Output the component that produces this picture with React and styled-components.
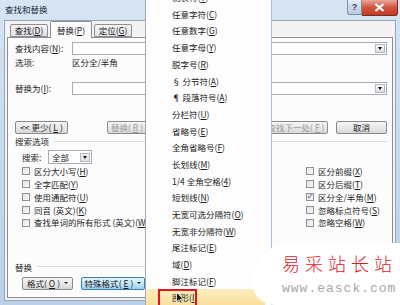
import styled, { createGlobalStyle } from "styled-components";

const GlobalStyle = createGlobalStyle`
  html, body { margin: 0; padding: 0; }
  body {
    width: 400px;
    height: 305px;
    overflow: hidden;
    font-family: "Noto Sans CJK SC", "Liberation Sans", sans-serif;
  }
`;

const Screen = styled.div`
  position: relative;
  width: 400px;
  height: 305px;
  overflow: hidden;
  background: linear-gradient(180deg, #d6e4f3 0%, #c4d7ec 60%, #bcd1e9 100%);
  font-size: 8.5px;
  line-height: 1;
  color: #1c1c1c;
`;

const TitleBar = styled.div`
  display: flex;
  align-items: flex-start;
  height: 20px;
`;

const Title = styled.div`
  padding: 5px 0 0 5px;
  color: #1e2a3a;
`;

const Controls = styled.div`
  display: flex;
  margin-left: auto;
  margin-right: 2px;
`;

const HelpBtn = styled.div`
  width: 15px;
  height: 15px;
  box-sizing: border-box;
  border: 1px solid #7d8ea6;
  border-top: none;
  border-radius: 0 0 0 3px;
  background: linear-gradient(180deg, #e9f0f8 0%, #cbd9ea 50%, #b9cbe1 100%);
  display: flex;
  align-items: center;
  justify-content: center;
  color: #3a4a62;
  font-family: "Liberation Sans", sans-serif;
  font-weight: bold;
  font-size: 9px;
`;

const CloseBtn = styled.div`
  width: 36px;
  height: 16px;
  box-sizing: border-box;
  border: 1px solid #7a2a22;
  border-top: none;
  border-left: none;
  border-radius: 0 0 3px 0;
  background: linear-gradient(180deg, #e9a89a 0%, #d0553f 50%, #c23a24 100%);
  display: flex;
  align-items: center;
  justify-content: center;
`;

const Client = styled.div`
  margin: 0 4px;
  height: 281px;
  box-sizing: border-box;
  background: #f3f3f3;
  border: 1px solid #93a6bd;
  display: flex;
  flex-direction: column;
`;

const TabRow = styled.div`
  display: flex;
  align-items: flex-end;
  gap: 2px;
  height: 16px;
  padding-left: 5px;
  position: relative;
  z-index: 1;
`;

const Tab = styled.div`
  box-sizing: border-box;
  width: ${(p) => p.$w}px;
  height: ${(p) => (p.$active ? 17 : 13)}px;
  margin-bottom: ${(p) => (p.$active ? -1 : 0)}px;
  border: 1px solid #8b8e96;
  border-bottom: ${(p) => (p.$active ? "none" : "1px solid #8b8e96")};
  border-radius: 2px 2px 0 0;
  background: ${(p) =>
    p.$active ? "#fcfcfc" : "linear-gradient(180deg, #f4f4f4 0%, #e2e2e2 100%)"};
  display: flex;
  align-items: center;
  justify-content: center;
`;

const Panel = styled.div`
  margin: 0 2px;
  height: 261px;
  box-sizing: border-box;
  border: 1px solid #8c8e94;
  background: #fcfcfc;
  padding: 0 5px 0 7px;
  display: flex;
  flex-direction: column;
`;

const FieldRow = styled.div`
  display: flex;
  align-items: center;
  height: ${(p) => p.$h || 13}px;
  margin-top: ${(p) => p.$mt || 0}px;
  padding-left: ${(p) => p.$indent || 0}px;
`;

const FieldLabel = styled.div`
  width: ${(p) => p.$w}px;
  flex-shrink: 0;
`;

const Combo = styled.div`
  width: ${(p) => p.$w}px;
  height: ${(p) => p.$h || 13}px;
  box-sizing: border-box;
  border: 1px solid #a5acb5;
  background: #fff;
  display: flex;
  align-items: center;
  justify-content: space-between;
  padding-left: 3px;
`;

const ComboArrow = styled.div`
  width: 10px;
  height: 9px;
  margin-right: 1px;
  box-sizing: border-box;
  border: 1px solid #b4b9c0;
  background: linear-gradient(180deg, #f6f6f6 0%, #dedede 100%);
  display: flex;
  align-items: center;
  justify-content: center;
  &::after {
    content: "";
    border-left: 2.5px solid transparent;
    border-right: 2.5px solid transparent;
    border-top: 3px solid #111;
  }
`;

const Btn = styled.div`
  width: ${(p) => p.$w}px;
  height: 13px;
  box-sizing: border-box;
  margin-left: ${(p) => p.$ml || 0}px;
  border: 1px solid ${(p) => (p.$pressed ? "#3c7fb1" : "#8a8a8a")};
  border-radius: 2px;
  background: ${(p) =>
    p.$pressed
      ? "linear-gradient(180deg, #e5f4fc 0%, #c4e5f6 50%, #98d1ef 100%)"
      : "linear-gradient(180deg, #f6f6f6 0%, #e8e8e8 50%, #d8d8d8 100%)"};
  color: ${(p) => (p.$disabled ? "#9a9a9a" : "#1c1c1c")};
  display: flex;
  align-items: center;
  justify-content: center;
  gap: 2px;
`;

const Caret = styled.span`
  border-left: 2px solid transparent;
  border-right: 2px solid transparent;
  border-top: 2.5px solid #222;
  margin-left: 2px;
`;

const Spacer = styled.div`
  flex: 1;
`;

const SectionTitle = styled.div`
  display: flex;
  align-items: center;
  height: 12px;
  margin-top: ${(p) => p.$mt || 0}px;
  &::after {
    content: "";
    flex: 1;
    height: 1px;
    margin-left: 5px;
    background: #dcdcdc;
  }
`;

const CheckGrid = styled.div`
  display: grid;
  grid-template-columns: 284px 1fr;
  grid-auto-flow: column;
  grid-template-rows: repeat(5, 12.8px);
  margin-top: 1px;
  padding-left: 7px;
`;

const CheckItem = styled.div`
  display: flex;
  align-items: center;
  gap: 4px;
  white-space: nowrap;
`;

const Box = styled.span`
  width: 8px;
  height: 8px;
  box-sizing: border-box;
  border: 1px solid #8f8f8f;
  background: linear-gradient(135deg, #e4e4e4 0%, #f8f8f8 100%);
  display: flex;
  align-items: center;
  justify-content: center;
  color: #2a4f9c;
  font-size: 8px;
  font-family: "DejaVu Sans", sans-serif;
`;

const Menu = styled.div`
  position: absolute;
  left: 145px;
  top: -11px;
  width: 127px;
  box-sizing: border-box;
  background: #fdfdfd;
  border-left: 1px solid #a2a9b3;
  border-right: 1px solid #a8c0da;
`;

const MenuItem = styled.div`
  position: relative;
  height: 16.7px;
  box-sizing: border-box;
  display: flex;
  align-items: center;
  padding-left: 26px;
  margin-right: ${(p) => (p.$hot ? 6 : 0)}px;
  background: ${(p) =>
    p.$hot ? "linear-gradient(180deg, #fdeec0 0%, #fbdf9a 100%)" : "transparent"};
  color: #222;
  white-space: nowrap;
`;

const RedMark = styled.div`
  position: absolute;
  left: 12px;
  top: 0;
  width: 39px;
  height: 19px;
  box-sizing: border-box;
  border: 2px solid #e2141c;
`;

const Pointer = styled.svg`
  position: absolute;
  left: 30px;
  top: 3px;
`;

const Watermark = styled.div`
  position: absolute;
  left: 252px;
  top: 243px;
  width: 148px;
  height: 62px;
  box-sizing: border-box;
  background: #fff;
  border-radius: 40px 0 0 24px;
  padding: 9px 0 0 30px;
  display: flex;
  flex-direction: column;
`;

const MarkTitle = styled.div`
  color: #e3161e;
  font-size: 18px;
  font-weight: 300;
  letter-spacing: 5px;
  line-height: 22px;
  white-space: nowrap;
`;

const MarkUrl = styled.div`
  margin-top: 8px;
  color: #a6a6a6;
  font-family: "Liberation Mono", monospace;
  font-size: 13px;
  letter-spacing: 1px;
  white-space: nowrap;
`;

const K = ({ children }) => (
  <>
    (<u>{children}</u>)
  </>
);

const Check = ({ label, k, checked }) => (
  <CheckItem>
    <Box>{checked ? "✓" : ""}</Box>
    <span>
      {label}
      <K>{k}</K>
    </span>
  </CheckItem>
);

const menuItems = [
  ["制表符", "T"],
  ["任意字符", "C"],
  ["任意数字", "G"],
  ["任意字母", "Y"],
  ["脱字号", "R"],
  ["§ 分节符", "A"],
  ["¶ 段落符号", "A"],
  ["分栏符", "U"],
  ["省略号", "E"],
  ["全角省略号", "F"],
  ["长划线", "M"],
  ["1/4 全角空格", "4"],
  ["短划线", "N"],
  ["无宽可选分隔符", "O"],
  ["无宽非分隔符", "W"],
  ["尾注标记", "E"],
  ["域", "D"],
  ["脚注标记", "F"],
  ["图形", "I"],
  ["手动换行符", "L"],
];

export default function App() {
  return (
    <Screen>
      <GlobalStyle />
      <TitleBar>
        <Title>查找和替换</Title>
        <Controls>
          <HelpBtn>?</HelpBtn>
          <CloseBtn>
            <svg width="11" height="9" viewBox="0 0 11 9">
              <path d="M1.5 1 L9.5 8 M9.5 1 L1.5 8" stroke="#fff" strokeWidth="2.2" />
            </svg>
          </CloseBtn>
        </Controls>
      </TitleBar>

      <Client>
        <TabRow>
          <Tab $w={38}>
            查找<K>D</K>
          </Tab>
          <Tab $w={42} $active>
            替换<K>P</K>
          </Tab>
          <Tab $w={38}>
            定位<K>G</K>
          </Tab>
        </TabRow>

        <Panel>
          <FieldRow $mt={4}>
            <FieldLabel $w={57}>
              查找内容<K>N</K>:
            </FieldLabel>
            <Combo $w={316}>
              <span />
              <ComboArrow />
            </Combo>
          </FieldRow>
          <FieldRow $mt={1} $h={12}>
            <FieldLabel $w={57}>选项:</FieldLabel>
            <span>区分全/半角</span>
          </FieldRow>
          <FieldRow $mt={14}>
            <FieldLabel $w={57}>
              替换为<K>I</K>:
            </FieldLabel>
            <Combo $w={316}>
              <span />
              <ComboArrow />
            </Combo>
          </FieldRow>

          <FieldRow $mt={26}>
            <Btn $w={53}>
              &lt;&lt; 更少<K>L</K>
            </Btn>
            <Btn $w={40} $ml={39} $disabled>
              替换<K>R</K>
            </Btn>
            <Spacer />
            <Btn $w={64} $disabled>
              查找下一处<K>F</K>
            </Btn>
            <Btn $w={51} $ml={8}>
              取消
            </Btn>
          </FieldRow>

          <SectionTitle $mt={1}>搜索选项</SectionTitle>
          <FieldRow $mt={3} $h={14} $indent={7}>
            <FieldLabel $w={26}>搜索:</FieldLabel>
            <Combo $w={44} $h={14}>
              <span>全部</span>
              <ComboArrow />
            </Combo>
          </FieldRow>

          <CheckGrid>
            <Check label="区分大小写" k="H" />
            <Check label="全字匹配" k="Y" />
            <Check label="使用通配符" k="U" />
            <Check label="同音 (英文)" k="K" />
            <Check label="查找单词的所有形式 (英文)" k="W" />
            <Check label="区分前缀" k="X" />
            <Check label="区分后缀" k="T" />
            <Check label="区分全/半角" k="M" checked />
            <Check label="忽略标点符号" k="S" />
            <Check label="忽略空格" k="W" />
          </CheckGrid>

          <SectionTitle $mt={32}>替换</SectionTitle>
          <FieldRow $mt={4} $indent={7}>
            <Btn $w={51}>
              格式<K>O</K>
              <Caret />
            </Btn>
            <Btn $w={64} $ml={8} $pressed>
              特殊格式<K>E</K>
              <Caret />
            </Btn>
          </FieldRow>
        </Panel>
      </Client>

      <Menu>
        {menuItems.map(([label, k], i) => {
          const hot = label === "图形";
          return (
            <MenuItem key={i} $hot={hot}>
              {label}
              <K>{k}</K>
              {hot && (
                <>
                  <RedMark />
                  <Pointer width="8" height="12" viewBox="0 0 8 12">
                    <path d="M0.5 0.5 L0.5 10 L2.8 7.8 L4.6 11.5 L6 10.8 L4.3 7.2 L7.4 7.2 Z" fill="#111" stroke="#fff" strokeWidth="0.8" />
                  </Pointer>
                </>
              )}
            </MenuItem>
          );
        })}
      </Menu>

      <Watermark>
        <MarkTitle>易采站长站</MarkTitle>
        <MarkUrl>www.easck.com</MarkUrl>
      </Watermark>
    </Screen>
  );
}
